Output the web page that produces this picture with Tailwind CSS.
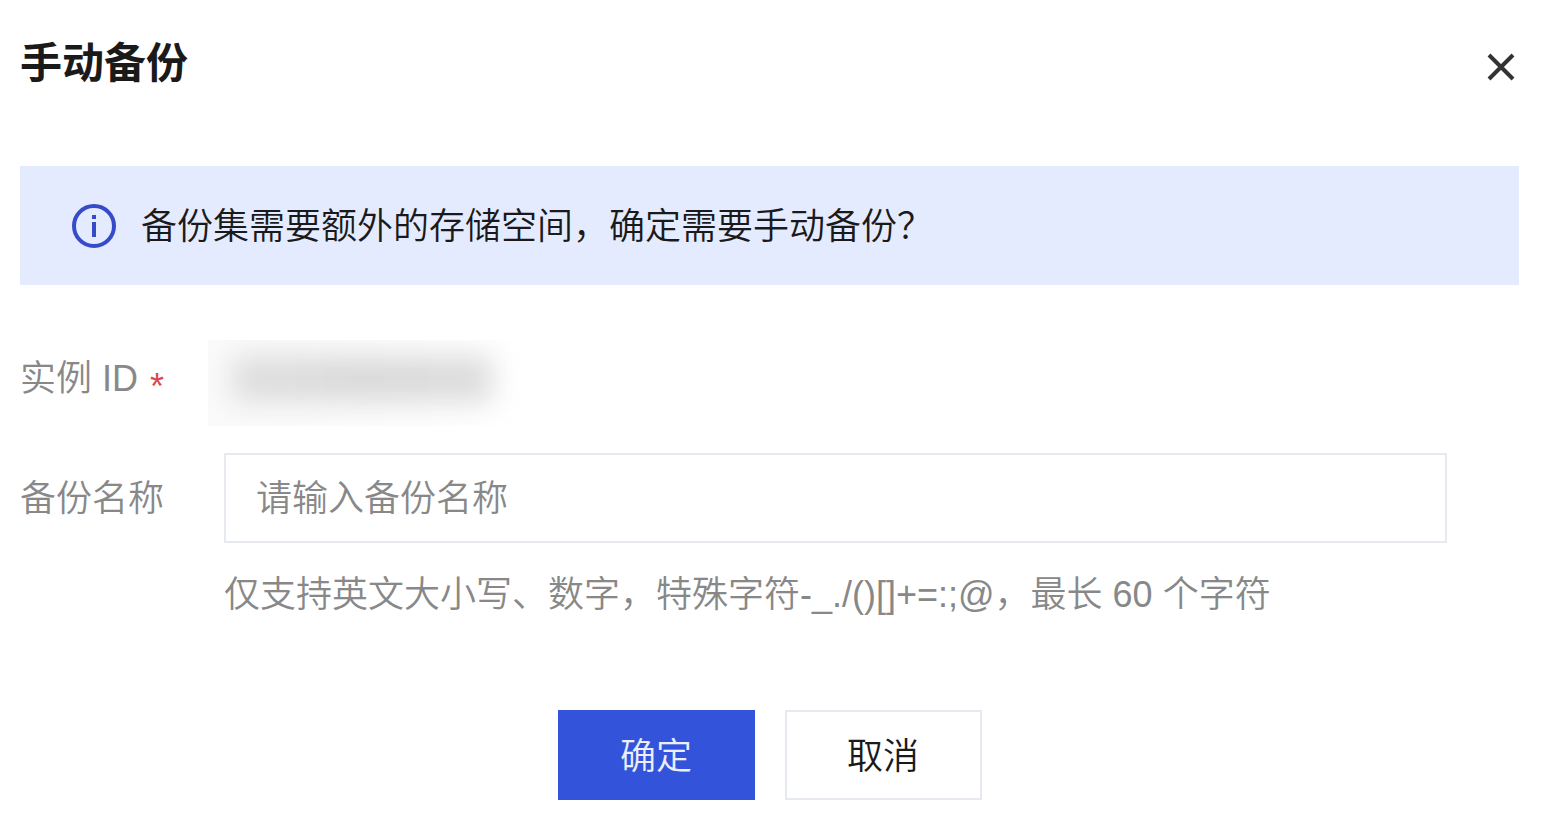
<!DOCTYPE html>
<html lang="zh-CN">
<head>
    <meta charset="UTF-8">
    <meta name="viewport" content="width=device-width, initial-scale=1.0">
    <title>手动备份</title>
    <!-- Tailwind CSS CDN -->
    <script src="https://cdn.jsdelivr.net/npm/@tailwindcss/browser@4"></script>
    <style>
        body {
            font-family: 'Liberation Sans', 'Noto Sans CJK SC', sans-serif;
        }
    </style>
</head>
<body class="bg-white text-[#1a1a1a] text-[36px] leading-[54px] font-[350]">
    <div role="dialog" aria-labelledby="dialogTitle" class="pl-5 pr-7 pt-8">
        <!-- Header -->
        <header class="flex items-center justify-between">
            <h1 id="dialogTitle" class="pt-0.5 text-[42px] leading-[60px] font-bold">手动备份</h1>
            <button type="button" aria-label="关闭" class="p-1 mt-2">
                <svg class="w-7 h-7" viewBox="0 0 28 28" fill="none" stroke="#333" stroke-width="4">
                    <path d="M2 2L26 26M26 2L2 26"/>
                </svg>
            </button>
        </header>

        <!-- Notice -->
        <div class="mt-[72px] flex items-center gap-6 bg-[#e5ebff] h-[119px] px-[51px]">
            <svg class="w-[46px] h-[46px] shrink-0" viewBox="0 0 46 46" fill="none">
                <circle cx="23" cy="23" r="20" stroke="#354bc7" stroke-width="4"/>
                <path d="M23 19V34M23 12V16" stroke="#354bc7" stroke-width="4"/>
            </svg>
            <p class="pt-0.5">备份集需要额外的存储空间，确定需要手动备份？</p>
        </div>

        <form>
            <!-- Instance ID -->
            <div class="mt-[55px] flex text-[#888]">
                <div class="w-[188px] h-[86px] pt-3 flex gap-3">
                    <span>实例 ID</span>
                    <span class="mt-2 text-[#db4a4c]">*</span>
                </div>
                <div class="w-[312px] h-[86px] bg-linear-to-r from-[#fafafa] to-white overflow-hidden px-6 py-4">
                    <div class="h-[46px] w-[260px] bg-linear-to-r from-[#dedede] via-[#d9d9d9] to-[#dcdcdc] blur-[14px]"></div>
                </div>
            </div>

            <!-- Backup name -->
            <div class="mt-[27px] flex pr-[72px] text-[#888]">
                <label for="backupName" class="w-[204px] shrink-0 pt-[19px]">备份名称</label>
                <div class="flex-1">
                    <input id="backupName" type="text" placeholder="请输入备份名称" class="block w-full h-[90px] border-2 border-[#e7e9f0] pt-0.5 px-[30px] placeholder:text-[#888] outline-none">
                    <p class="mt-[25px]">仅支持英文大小写、数字，特殊字符-_./()[]+=:;@，最长 60 个字符</p>
                </div>
            </div>

            <!-- Actions -->
            <div class="mt-[88px] flex justify-center gap-[30px]">
                <button type="submit" class="w-[197px] h-[90px] pt-1 bg-[#3354da] text-[#ebeefb]">确定</button>
                <button type="button" class="w-[197px] h-[90px] pt-1 border-2 border-[#e7e9f0]">取消</button>
            </div>
        </form>
    </div>
</body>
</html>
